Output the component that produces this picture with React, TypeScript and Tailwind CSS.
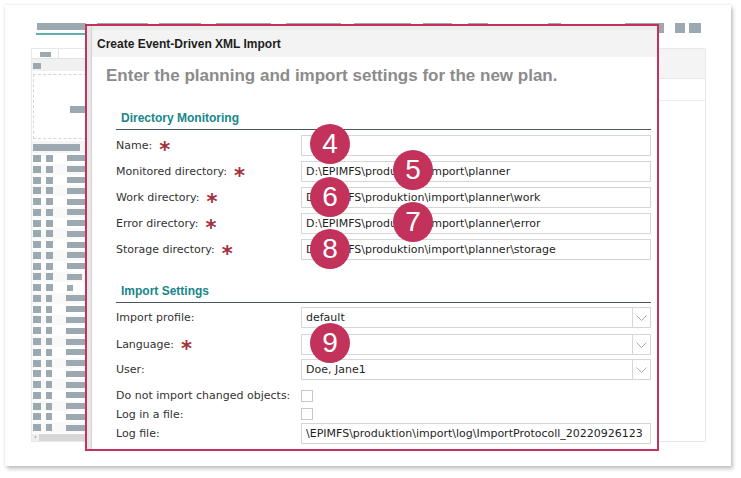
import React from 'react';

const block = 'bg-[#9ca9b0]';

const sideRows = Array.from({ length: 26 }, (_, i) => ({
  c2: i < 13 ? 7 : 6,
  c3: i === 11 ? 15 : i === 12 ? 6 : 34,
}));

function Chevron() {
  return (
    <svg width="11" height="6" viewBox="0 0 11 6" fill="none">
      <path d="M0.5 0.5 L5.5 5.5 L10.5 0.5" stroke="#a9a9a9" strokeWidth="1" />
    </svg>
  );
}

function Label({ text, required }: { text: string; required?: boolean }) {
  return (
    <div className="flex items-center pt-[2px] text-[11px] text-[#333] font-['DejaVu_Sans',sans-serif] whitespace-nowrap">
      <span>{text}</span>
      {required && (
        <span className="ml-[7px] text-[21px] leading-none font-bold text-[#a3313d] translate-y-[4px] font-['DejaVu_Sans',sans-serif]">*</span>
      )}
    </div>
  );
}

function TextField({ value }: { value?: string }) {
  return (
    <div className="h-[21px] border border-[#d6d6d6] bg-white flex items-center pl-[4px] pt-[2px] overflow-hidden whitespace-nowrap text-[11px] text-[#1f1f1f] font-['DejaVu_Sans',sans-serif]">
      {value}
    </div>
  );
}

function SelectField({ value }: { value?: string }) {
  return (
    <div className="h-[21px] border border-[#d6d6d6] bg-white flex items-stretch">
      <div className="flex-1 flex items-center pl-[4px] pt-[2px] text-[11px] text-[#1f1f1f] font-['DejaVu_Sans',sans-serif]">{value}</div>
      <div className="w-[18px] border-l border-[#d6d6d6] flex items-center justify-center">
        <Chevron />
      </div>
    </div>
  );
}

function Section({ title }: { title: string }) {
  return (
    <div className="h-[20px] border-b border-[#4b5661] pl-[5px] text-[12px] leading-[16px] font-bold text-[#18868a] font-['Liberation_Sans',Arial,sans-serif]">
      {title}
    </div>
  );
}

function Row({ label, required, children, h = 'h-[21px]' }: { label: string; required?: boolean; children: React.ReactNode; h?: string }) {
  return (
    <div className={`grid grid-cols-[185px_350px] items-center ${h}`}>
      <Label text={label} required={required} />
      {children}
    </div>
  );
}

function Badge({ n, x, y }: { n: number; x: number; y: number }) {
  return (
    <div
      className="absolute w-[40px] h-[40px] rounded-full bg-[#c2325a] flex items-center justify-center text-white text-[28px] leading-none font-['Liberation_Sans',Arial,sans-serif]"
      style={{ left: x - 20, top: y - 20 }}
    >
      {n}
    </div>
  );
}

function Sidebar() {
  return (
    <div className="w-[70px] flex flex-col">
      <div className="h-[11px] flex border-b border-[#e2e2e2]">
        <div className="w-[27px] border-r border-[#e2e2e2] bg-white pl-[8px] pt-[3px]">
          <div className={`w-[11px] h-[5px] ${block}`} />
        </div>
      </div>
      <div className="h-[12px] bg-[#f1f1f1] pl-[1px] pt-[4px]">
        <div className={`w-[8px] h-[6px] ${block}`} />
      </div>
      <div className="mt-[3px] ml-[1px] h-[67px] border border-dashed border-[#d6d6d6] pt-[31px] pl-[36px]">
        <div className={`w-[24px] h-[7px] ${block}`} />
      </div>
      <div className="mt-[2px] h-[13px] bg-[#f5f5f5] pl-[1px] pt-[3px]">
        <div className={`w-[47px] h-[7px] ${block}`} />
      </div>
      <div className="flex flex-col">
        {sideRows.map((r, i) => (
          <div key={i} className={`h-[10.77px] flex items-center pl-[1px] ${i % 2 ? 'bg-[#f9f9f9]' : 'bg-white'}`}>
            <div className={`w-[8px] h-[7px] ${block}`} />
            <div className={`ml-[5px] h-[7px] ${block}`} style={{ width: r.c2 }} />
            <div className={`ml-[14px] h-[6px] ${block}`} style={{ width: r.c3 }} />
          </div>
        ))}
      </div>
      <div className="mt-[1px] h-[7px] flex items-center bg-[#f0f0f0]">
        <span className="text-[7px] leading-none text-[#777] w-[7px] text-center font-['DejaVu_Sans',sans-serif]">‹</span>
        <div className="flex-1 h-[7px] bg-[#d6d6d6]" />
      </div>
    </div>
  );
}

export default function App() {
  return (
    <div className="relative w-[741px] h-[478px] bg-white overflow-hidden">
      {/* background page */}
      <div className="ml-[5px] mt-[5px] w-[726px] h-[461px] bg-white shadow-[0_0_3px_rgba(0,0,0,0.12),2px_3px_4px_rgba(0,0,0,0.22)] pt-[18px]">
        <div className="flex items-start ml-[32px] h-[25px]">
          <div className="flex flex-col">
            <div className={`w-[49px] h-[7px] ${block}`} />
            <div className="mt-[3px] -ml-[1px] w-[52px] h-[2px] bg-[#5fb1b1]" />
          </div>
          <div className={`ml-[9px] w-[51px] h-[7px] ${block}`} />
          <div className={`ml-[11px] w-[42px] h-[7px] ${block}`} />
          <div className={`ml-[15px] w-[55px] h-[7px] ${block}`} />
          <div className={`ml-[15px] w-[55px] h-[7px] ${block}`} />
          <div className={`ml-[13px] w-[57px] h-[7px] ${block}`} />
          <div className={`ml-[12px] w-[29px] h-[7px] ${block}`} />
          <div className={`ml-[16px] w-[20px] h-[7px] ${block}`} />
          <div className={`ml-[60px] w-[13px] h-[7px] ${block}`} />
          <div className={`ml-[64px] w-[39px] h-[10px] ${block}`} />
          <div className={`ml-[11px] w-[10px] h-[10px] ${block}`} />
          <div className={`ml-[4px] w-[12px] h-[10px] ${block}`} />
        </div>
        <div className="ml-[26px] w-[675px] h-[394px] border border-[#e8e8e8] flex overflow-hidden">
          <Sidebar />
          <div className="flex-1 flex flex-col">
            <div className="h-[30px] bg-[#f4f4f4] border-b border-[#e9e9e9]" />
            <div className="h-[22px] border-b border-[#ececec]" />
          </div>
        </div>
      </div>

      {/* dialog */}
      <div className="absolute left-[85px] top-[24px] w-[574px] h-[427px] border-2 border-[#c2325a] bg-white flex overflow-hidden">
        <div className="w-[5px] bg-[#e6e6e6] border-r border-[#d4d4d4]" />
        <div className="flex-1 flex flex-col">
          <div className="h-[4px] bg-[#ececec]" />
          <div className="h-[27px] bg-[#f3f3f3] flex items-center pl-[5px] pt-[1px] text-[12px] font-bold text-[#1e1e1e] font-['Liberation_Sans',Arial,sans-serif]">
            Create Event-Driven XML Import
          </div>
          <div className="mt-[9px] ml-[14px] text-[17px] leading-[20px] font-bold text-[#8b8b8b] font-['Liberation_Sans',Arial,sans-serif]">
            Enter the planning and import settings for the new plan.
          </div>
          <div className="mt-[24px] ml-[24px] w-[535px] flex flex-col">
            <Section title="Directory Monitoring" />
            <div className="mt-[4px] flex flex-col gap-[5px]">
              <Row label="Name:" required><TextField /></Row>
              <Row label="Monitored directory:" required><TextField value="D:\EPIMFS\produktion\import\planner" /></Row>
              <Row label="Work directory:" required><TextField value="D:\EPIMFS\produktion\import\planner\work" /></Row>
              <Row label="Error directory:" required><TextField value="D:\EPIMFS\produktion\import\planner\error" /></Row>
              <Row label="Storage directory:" required><TextField value="D:\EPIMFS\produktion\import\planner\storage" /></Row>
            </div>
            <div className="mt-[24px]">
              <Section title="Import Settings" />
            </div>
            <div className="mt-[4px] flex flex-col gap-[5px]">
              <Row label="Import profile:"><SelectField value="default" /></Row>
              <Row label="Language:" required><SelectField /></Row>
              <Row label="User:"><SelectField value="Doe, Jane1" /></Row>
            </div>
            <div className="mt-[6px] flex flex-col">
              <Row label="Do not import changed objects:" h="h-[19px]">
                <div className="w-[12px] h-[12px] border border-[#c9c9c9] bg-white" />
              </Row>
              <Row label="Log in a file:" h="h-[18px]">
                <div className="w-[12px] h-[12px] border border-[#c9c9c9] bg-white" />
              </Row>
              <Row label="Log file:">
                <TextField value="\EPIMFS\produktion\import\log\ImportProtocoll_20220926123" />
              </Row>
            </div>
          </div>
        </div>
      </div>

      <Badge n={4} x={330} y={144} />
      <Badge n={5} x={413} y={170} />
      <Badge n={6} x={330} y={197} />
      <Badge n={7} x={413} y={222} />
      <Badge n={8} x={330} y={249} />
      <Badge n={9} x={330} y={343} />
    </div>
  );
}
